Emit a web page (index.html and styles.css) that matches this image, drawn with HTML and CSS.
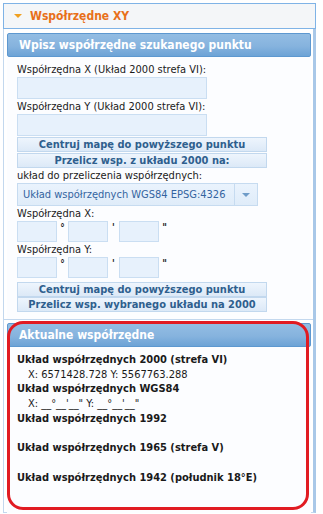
FILE: index.html
```html
<!DOCTYPE html>
<html>
<head>
	<title>Współrzędne XY</title>
	<link rel="stylesheet" href="styles.css">
</head>
<body>

	<div class="panel">
		<div class="panel-head"><span class="caret"></span>Współrzędne XY</div>
		<div class="panel-body">

			<!-- wpisywanie punktu -->
			<div class="box">
				<div class="box-head">Wpisz współrzędne szukanego punktu</div>
				<div class="box-body">
					<div class="lbl">Współrzędna X (Układ 2000 strefa VI):</div>
					<input class="field" type="text">
					<div class="lbl">Współrzędna Y (Układ 2000 strefa VI):</div>
					<input class="field" type="text">
					<button class="btn">Centruj mapę do powyższego punktu</button>
					<button class="btn">Przelicz wsp. z układu 2000 na:</button>
					<div class="lbl">układ do przeliczenia współrzędnych:</div>
					<div class="select">
						<span class="select-text">Układ współrzędnych WGS84 EPSG:4326</span>
						<span class="select-arrow"></span>
					</div>
					<div class="lbl">Współrzędna X:</div>
					<div class="dms">
						<input class="small" type="text"><span class="mark">°</span>
						<input class="small" type="text"><span class="mark">'</span>
						<input class="small" type="text"><span class="mark">"</span>
					</div>
					<div class="lbl">Współrzędna Y:</div>
					<div class="dms">
						<input class="small" type="text"><span class="mark">°</span>
						<input class="small" type="text"><span class="mark">'</span>
						<input class="small" type="text"><span class="mark">"</span>
					</div>
					<button class="btn low">Centruj mapę do powyższego punktu</button>
					<button class="btn tight">Przelicz wsp. wybranego układu na 2000</button>
				</div>
			</div>

			<!-- aktualne -->
			<div class="box current">
				<div class="box-head">Aktualne współrzędne</div>
				<div class="coords">
					<div class="sys">Układ współrzędnych 2000 (strefa VI)</div>
					<div class="val">X: 6571428.728 Y: 5567763.288</div>
					<div class="sys">Układ współrzędnych WGS84</div>
					<div class="val">X: __°__'__" Y: __°__'__"</div>
					<div class="sys">Układ współrzędnych 1992</div>
					<div class="val">&nbsp;</div>
					<div class="sys">Układ współrzędnych 1965 (strefa V)</div>
					<div class="val">&nbsp;</div>
					<div class="sys">Układ współrzędnych 1942 (południk 18°E)</div>
				</div>
				<div class="marker"></div>
			</div>

		</div>
	</div>

</body>
</html>
```

FILE: styles.css
```css
body {
	margin: 0;
	padding: 3px 0 0 3px;
	background-color: #ffffff;
	font-family: "DejaVu Sans Condensed", "DejaVu Sans", sans-serif;
	font-size: 11px;
	color: #1a1a1a;
}
.panel {
	width: 313px;
}
.panel-head {
	height: 24px;
	line-height: 24px;
	border: 1px solid #7fb3e6;
	background-color: #f4f6f8;
	color: #e8701a;
	font-weight: bold;
	font-size: 12px;
	padding-left: 10px;
}
.caret {
	display: inline-block;
	width: 0;
	height: 0;
	border-left: 4px solid transparent;
	border-right: 4px solid transparent;
	border-top: 4px solid #f0a020;
	margin-right: 8px;
	vertical-align: 2px;
}
.panel-body {
	border-left: 1px solid #c3d8ee;
	border-right: 3px solid #a9c8e8;
	border-bottom: 1px solid #c3d8ee;
	padding: 4px 2px 3px 3px;
	height: 484px;
	box-sizing: border-box;
}
.box {
	position: relative;
	background-color: #fcfdff;
}
.box-head {
	height: 22px;
	line-height: 22px;
	border: 1px solid #5d98d0;
	border-radius: 2px;
	background: linear-gradient(#93bde3, #86b3de 55%, #6da3d6);
	color: #ffffff;
	font-weight: bold;
	font-size: 12px;
	padding-left: 11px;
}
.box-body {
	padding: 5px 0 7px 13px;
	border-bottom: 1px solid #c3d8ee;
	margin: 0 -2px 3px -3px;
}
.lbl {
	line-height: 13px;
	height: 13px;
	margin-top: 1px;
}
.field {
	display: block;
	box-sizing: border-box;
	width: 190px;
	height: 22px;
	margin: 1px 0 0 0;
	border: 1px solid #cadef2;
	background-color: #e7f1fc;
	padding: 0;
}
.btn {
	display: block;
	box-sizing: border-box;
	width: 250px;
	height: 15px;
	margin: 1px 0 0 0;
	padding: 0;
	border: 1px solid #c2d8ee;
	background: linear-gradient(#eef5fd, #dce9f7);
	color: #2f5f8e;
	font-family: inherit;
	font-size: 11px;
	font-weight: bold;
	line-height: 12px;
}
.btn.low {
	margin-top: 4px;
}
.btn.tight {
	margin-top: 0;
}
.select {
	display: flex;
	box-sizing: border-box;
	width: 241px;
	height: 23px;
	margin-top: 1px;
	border: 1px solid #c6dbf0;
	background: linear-gradient(#eaf3fd, #dfecf9);
	color: #3464a0;
}
.select-text {
	flex: 1;
	line-height: 21px;
	padding-left: 5px;
}
.select-arrow {
	width: 22px;
	border-left: 1px solid #c6dbf0;
	position: relative;
}
.select-arrow::after {
	content: "";
	position: absolute;
	left: 7px;
	top: 9px;
	border-left: 4px solid transparent;
	border-right: 4px solid transparent;
	border-top: 4px solid #6f9cc8;
}
.dms {
	display: flex;
	align-items: flex-start;
	margin-top: 1px;
	height: 21px;
}
.small {
	box-sizing: border-box;
	width: 40px;
	height: 21px;
	margin: 0;
	padding: 0;
	border: 1px solid #cadef2;
	background-color: #e7f1fc;
}
.mark {
	width: 11px;
	text-align: center;
	font-weight: bold;
	font-size: 10px;
	line-height: 14px;
}
.coords {
	padding: 6px 0 0 10px;
	height: 160px;
}
.sys {
	font-weight: bold;
	line-height: 14.7px;
	height: 14.7px;
}
.val {
	line-height: 14.7px;
	height: 14.7px;
	padding-left: 11px;
}
.marker {
	position: absolute;
	left: 0;
	top: -2px;
	width: 302px;
	height: 189px;
	box-sizing: border-box;
	border: 3px solid #e11b22;
	border-radius: 16px;
}
```
